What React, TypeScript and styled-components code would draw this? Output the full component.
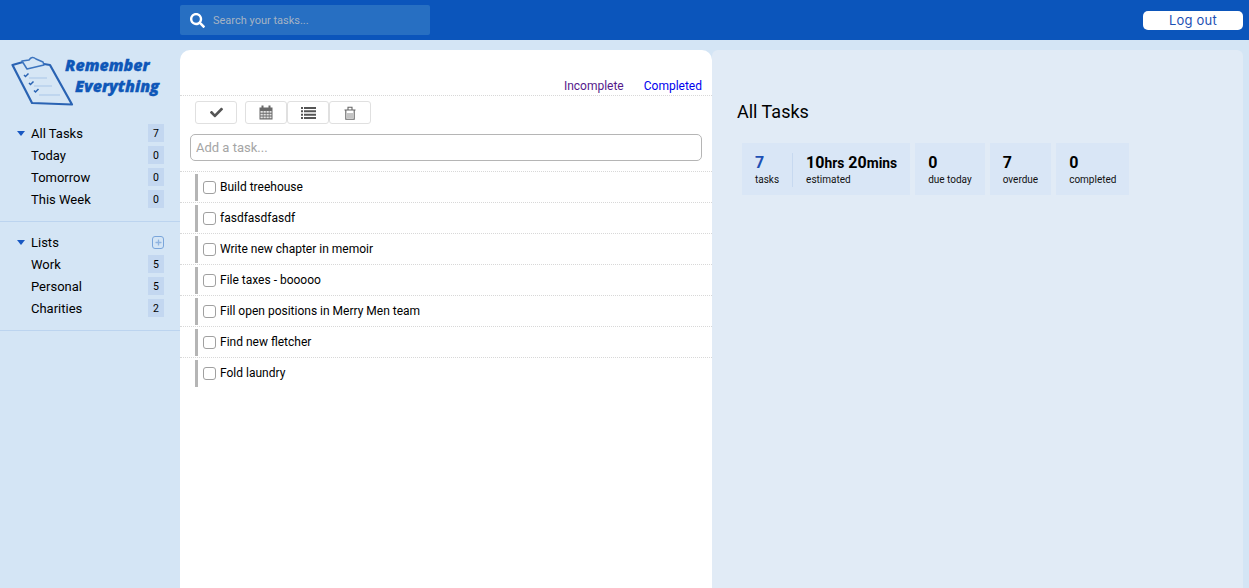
import React from "react";
import styled, { createGlobalStyle } from "styled-components";
import { FaCheck, FaPlus, FaSearch } from "react-icons/fa";

const tasks = [
  "Build treehouse",
  "fasdfasdfasdf",
  "Write new chapter in memoir",
  "File taxes - booooo",
  "Fill open positions in Merry Men team",
  "Find new fletcher",
  "Fold laundry",
];

const Logo = () => (
  <LogoBox>
    <svg width="66" height="54" viewBox="10 55 66 54" fill="none">
      <path d="M12.5 65 L23 62 L44 64 L50 65 L72 104.500 L32 103 Z" stroke="#2a63b3" strokeWidth="2.200" strokeLinejoin="round" fill="#d6e6f5" />
      <path d="M22 61 L29 60 Q32 55.500 36 59 L43 62 L44 65 L27 69 Z" stroke="#3d75bf" strokeWidth="1.500" strokeLinejoin="round" fill="#d6e6f5" />
      <path d="M24 75l1.500 1.500 3-3M29 83l1.500 1.500 3-3M34 90.500l1.500 1.500 3-3" stroke="#2a63b3" strokeWidth="1.500" />
      <path d="M29 78h18M34 86h18M39 95h21" stroke="#a9c6e8" strokeWidth="1" />
    </svg>
    <LogoText>
      <span>Remember</span>
      <span>Everything</span>
    </LogoText>
  </LogoBox>
);

const CalendarIcon = () => (
  <svg width="14" height="15" viewBox="0 0 14 15" fill="#6a6a6a">
    <path d="M0.500 2.500h2V0.500h2V2.500h5V0.500h2V2.500h2v12h-13z" />
    <path d="M1.500 6h2.300v1.800h-2.300zM4.500 6h2.300v1.800h-2.300zM7.500 6h2.300v1.800h-2.300zM10.500 6h2v1.800h-2zM1.500 8.700h2.300v1.800h-2.300zM4.500 8.700h2.300v1.800h-2.300zM7.500 8.700h2.300v1.800h-2.300zM10.500 8.700h2v1.800h-2zM1.500 11.400h2.300v1.800h-2.300zM4.500 11.400h2.300v1.800h-2.300zM7.500 11.400h2.300v1.800h-2.300zM10.500 11.400h2v1.800h-2z" fill="#e2e2e2" />
  </svg>
);

const ListIcon = () => (
  <svg width="15" height="12" viewBox="0 0 15 12" fill="#555">
    <path d="M0 0h2v2H0zM3 0h12v2H3zM0 3.300h2v2H0zM3 3.300h12v2H3zM0 6.700h2v2H0zM3 6.700h12v2H3zM0 10h2v2H0zM3 10h12v2H3z" />
  </svg>
);

const TrashIcon = () => (
  <svg width="12" height="14" viewBox="0 0 12 14" fill="none" stroke="#666">
    <path d="M0.500 4h11M1.800 4V13.300h8.400V4M4 3.700V1.200h4v2.500" strokeWidth="1.100" />
    <path d="M2.500 7h7v5.500h-7z" fill="#c4c4c4" stroke="none" />
  </svg>
);

function App() {
  return (
    <>
      <GlobalStyle />
      <Header>
        <Search>
          <FaSearch />
          <span>Search your tasks...</span>
        </Search>
        <LogOut>Log out</LogOut>
      </Header>
      <Body>
        <Sidebar>
          <Logo />
          <NavSection>
            <NavRow>
              <Caret />
              <span>All Tasks</span>
              <Count>7</Count>
            </NavRow>
            <NavRow>
              <span>Today</span>
              <Count>0</Count>
            </NavRow>
            <NavRow>
              <span>Tomorrow</span>
              <Count>0</Count>
            </NavRow>
            <NavRow>
              <span>This Week</span>
              <Count>0</Count>
            </NavRow>
          </NavSection>
          <NavSection>
            <NavRow>
              <Caret />
              <span>Lists</span>
              <AddList>
                <FaPlus />
              </AddList>
            </NavRow>
            <NavRow>
              <span>Work</span>
              <Count>5</Count>
            </NavRow>
            <NavRow>
              <span>Personal</span>
              <Count>5</Count>
            </NavRow>
            <NavRow>
              <span>Charities</span>
              <Count>2</Count>
            </NavRow>
          </NavSection>
        </Sidebar>
        <TaskPanel>
          <Tabs>
            <Tab $visited>Incomplete</Tab>
            <Tab>Completed</Tab>
          </Tabs>
          <Toolbar>
            <ToolButton>
              <FaCheck />
            </ToolButton>
            <ToolGroup>
              <ToolButton>
                <CalendarIcon />
              </ToolButton>
              <ToolButton>
                <ListIcon />
              </ToolButton>
              <ToolButton>
                <TrashIcon />
              </ToolButton>
            </ToolGroup>
          </Toolbar>
          <AddTask placeholder="Add a task..." />
          <TaskList>
            {tasks.map((t) => (
              <TaskRow key={t}>
                <TaskMark />
                <TaskCheck />
                <span>{t}</span>
              </TaskRow>
            ))}
          </TaskList>
        </TaskPanel>
        <Details>
          <Title>All Tasks</Title>
          <Stats>
            <Tile>
              <Stat>
                <StatNum $blue>7</StatNum>
                <StatLabel>tasks</StatLabel>
              </Stat>
              <Stat $divided>
                <StatNum>
                  10<small>hrs</small> 20<small>mins</small>
                </StatNum>
                <StatLabel>estimated</StatLabel>
              </Stat>
            </Tile>
            <Tile>
              <Stat>
                <StatNum>0</StatNum>
                <StatLabel>due today</StatLabel>
              </Stat>
            </Tile>
            <Tile>
              <Stat>
                <StatNum>7</StatNum>
                <StatLabel>overdue</StatLabel>
              </Stat>
            </Tile>
            <Tile>
              <Stat>
                <StatNum>0</StatNum>
                <StatLabel>completed</StatLabel>
              </Stat>
            </Tile>
          </Stats>
        </Details>
      </Body>
    </>
  );
}

const GlobalStyle = createGlobalStyle`
  html, body {
    margin: 0;
    height: 588px;
    overflow: hidden;
    background: #d4e5f5;
    font-family: Roboto, "Liberation Sans", sans-serif;
  }
`;

const Header = styled.header`
  height: 40px;
  background: #0b55bb;
  display: flex;
  align-items: center;
  justify-content: space-between;
  padding: 0 6px 0 180px;
`;

const Search = styled.div`
  width: 250px;
  height: 30px;
  box-sizing: border-box;
  padding-left: 10px;
  display: flex;
  align-items: center;
  gap: 8px;
  background: #276fc2;
  border-radius: 2px;
  color: #a5b3c4;
  font-size: 11px;
  svg {
    color: #fff;
    width: 15px;
    height: 15px;
  }
`;

const LogOut = styled.button`
  width: 100px;
  height: 19px;
  padding: 0 0 2px;
  border: none;
  border-radius: 5px;
  background: #fff;
  color: #1d50b4;
  font-family: Inter, Roboto, sans-serif;
  font-size: 13px;
  letter-spacing: 0.2px;
  margin-top: 1px;
`;

const Body = styled.div`
  display: grid;
  grid-template-columns: 180px 532px 531px;
  height: 548px;
`;

const Sidebar = styled.aside`
  color: #000;
`;

const LogoBox = styled.div`
  height: 72px;
  box-sizing: border-box;
  padding: 15px 0 0 10px;
  display: flex;
  svg {
    flex: none;
  }
`;

const LogoText = styled.div`
  margin-left: -11px;
  display: flex;
  flex-direction: column;
  font-family: "Open Sans", sans-serif;
  font-style: italic;
  font-weight: 800;
  font-size: 16px;
  line-height: 21px;
  color: #0f57b8;
  -webkit-text-stroke: 0.3px #0f57b8;
  span:last-child {
    margin-left: 10px;
  }
`;

const NavSection = styled.section`
  padding: 10px 16px 11px 31px;
  border-bottom: 1px solid #bcd4ef;
  & + & {
    padding-top: 9px;
  }
`;

const NavRow = styled.div`
  position: relative;
  height: 22px;
  display: flex;
  align-items: center;
  justify-content: space-between;
  font-size: 13px;
`;

const Caret = styled.i`
  position: absolute;
  left: -14px;
  top: 9px;
  border-left: 4px solid transparent;
  border-right: 4px solid transparent;
  border-top: 5px solid #1858c2;
`;

const Count = styled.span`
  width: 16px;
  height: 18px;
  display: flex;
  align-items: center;
  justify-content: center;
  background: #c3d7f0;
  font-size: 10.5px;
`;

const AddList = styled.span`
  width: 10px;
  height: 11px;
  border: 1px solid #7aa5da;
  border-radius: 3px;
  display: flex;
  align-items: center;
  justify-content: center;
  color: #8fb4e0;
  svg {
    width: 7px;
    height: 7px;
  }
`;

const TaskPanel = styled.main`
  margin-top: 10px;
  background: #fff;
  border-radius: 10px 10px 0 0;
`;

const Tabs = styled.nav`
  height: 46px;
  box-sizing: border-box;
  padding: 0 10px 1px 0;
  display: flex;
  justify-content: flex-end;
  align-items: flex-end;
  gap: 20px;
  border-bottom: 1px dotted #d8d8d8;
`;

const Tab = styled.a<{ $visited?: boolean }>`
  font-size: 12px;
  line-height: 15px;
  color: ${(p) => (p.$visited ? "#551a8b" : "#0000ee")};
`;

const Toolbar = styled.div`
  display: flex;
  gap: 8px;
  padding: 5px 0 0 15px;
`;

const ToolGroup = styled.div`
  display: flex;
`;

const ToolButton = styled.button`
  width: 42px;
  height: 23px;
  padding: 0;
  display: flex;
  align-items: center;
  justify-content: center;
  background: #fff;
  border: 1px solid #e0e0e0;
  border-radius: 3px;
  color: #555;
  font-size: 13px;
`;

const AddTask = styled.input`
  display: block;
  box-sizing: border-box;
  width: 512px;
  height: 27px;
  margin: 10px 0 10px 10px;
  padding: 0 5px;
  border: 1px solid #b5b5b5;
  border-radius: 5px;
  font-family: inherit;
  font-size: 13px;
  outline: none;
  &::placeholder {
    color: #a5a5a5;
  }
`;

const TaskList = styled.div`
  border-top: 1px dotted #d8d8d8;
`;

const TaskRow = styled.div`
  height: 31px;
  box-sizing: border-box;
  border-bottom: 1px dotted #d8d8d8;
  padding-left: 15px;
  display: flex;
  align-items: center;
  font-size: 12px;
  color: #000;
  &:last-child {
    border-bottom-color: transparent;
  }
`;

const TaskMark = styled.i`
  width: 3px;
  height: 27px;
  margin-right: 5px;
  background: #b5b5b5;
`;

const TaskCheck = styled.i`
  width: 13px;
  height: 13px;
  box-sizing: border-box;
  margin-right: 4px;
  background: #fff;
  border: 1px solid #a0a0a0;
  border-radius: 3px;
`;

const Details = styled.section`
  margin-top: 10px;
  background: #e1ebf6;
  border-radius: 6px 6px 0 0;
  padding: 50px 0 0 25px;
`;

const Title = styled.h2`
  margin: 0;
  font-size: 18px;
  font-weight: 400;
  line-height: 24px;
  color: #000;
`;

const Stats = styled.div`
  display: flex;
  gap: 5px;
  margin: 19px 0 0 5px;
`;

const Tile = styled.div`
  height: 52px;
  box-sizing: border-box;
  padding: 10px 0 8px;
  display: flex;
  background: #d9e6f6;
`;

const Stat = styled.div<{ $divided?: boolean }>`
  padding: 0 13px;
  ${(p) => p.$divided && "border-left: 1px solid #c7d9f0;"}
`;

const StatNum = styled.div<{ $blue?: boolean }>`
  font-size: 16px;
  font-weight: 700;
  line-height: 20px;
  white-space: nowrap;
  color: ${(p) => (p.$blue ? "#1d50b4" : "#000")};
  small {
    font-size: 13.8px;
  }
`;

const StatLabel = styled.div`
  font-size: 10px;
  line-height: 14px;
  white-space: nowrap;
  color: #111;
`;

export default App;
